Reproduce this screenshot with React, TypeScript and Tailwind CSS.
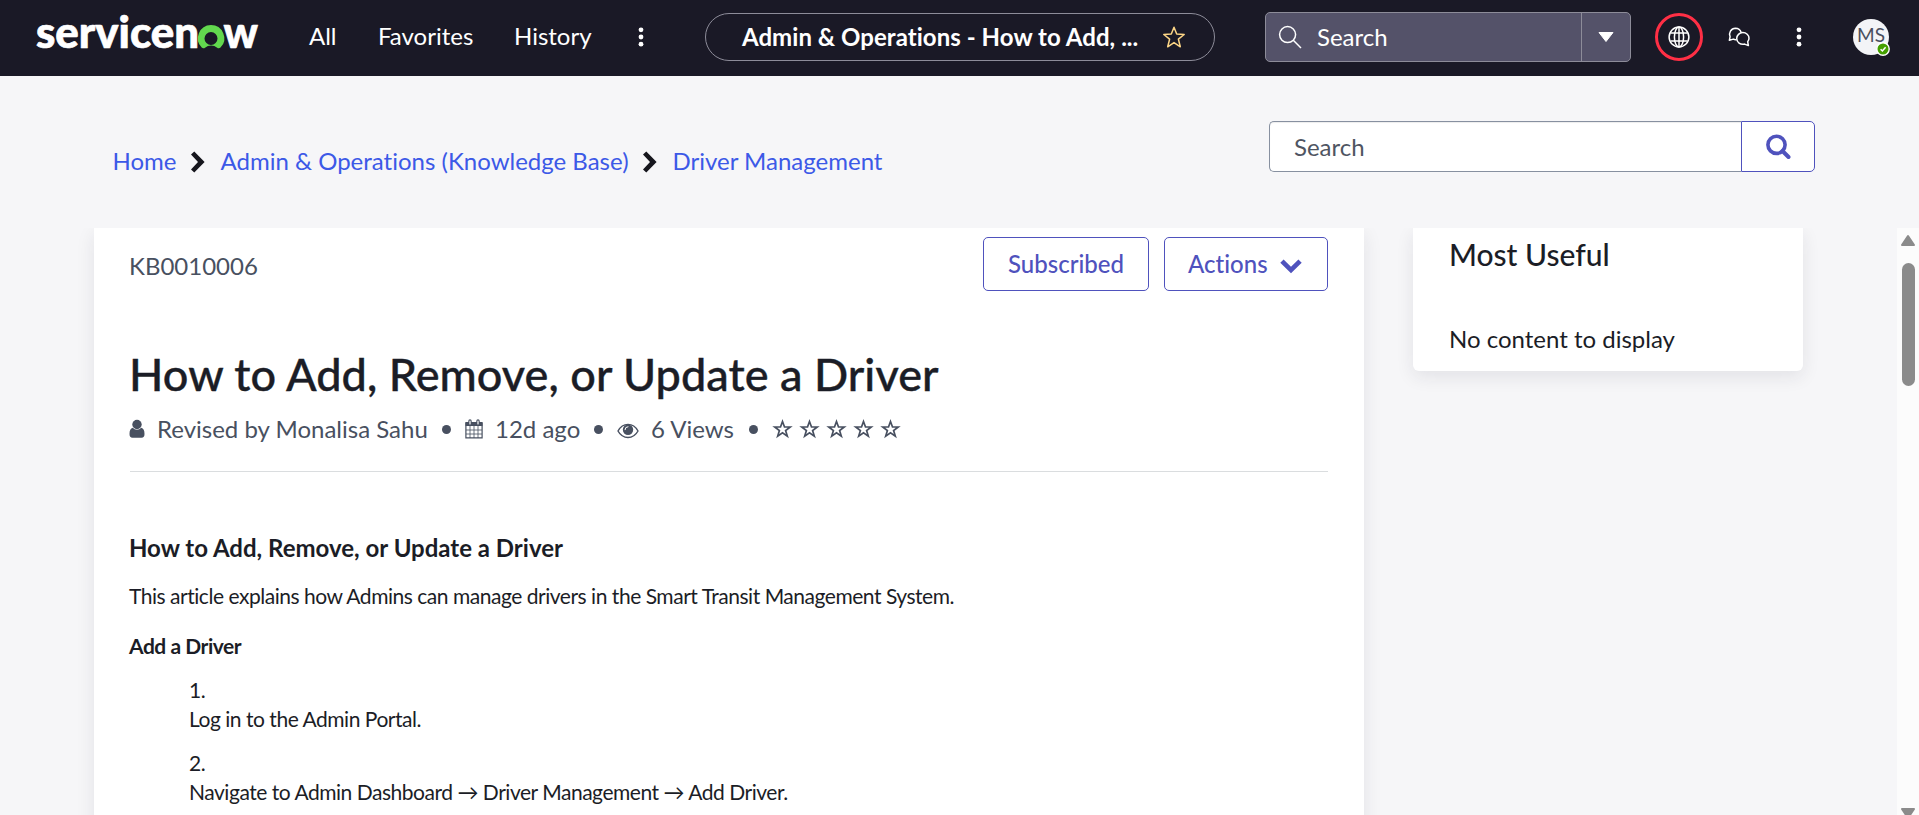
import React from "react";

function Dots({ className }: { className: string }) {
  return (
    <svg className={className} width="6" height="24" viewBox="0 0 6 24" fill="#fff">
      <circle cx="3" cy="4.8" r="2.4" />
      <circle cx="3" cy="12" r="2.4" />
      <circle cx="3" cy="19.2" r="2.4" />
    </svg>
  );
}

function Logo() {
  return (
    <svg className="ml-[34px] shrink-0" width="228" height="76" viewBox="34 0 228 76" fontFamily="Lato, sans-serif" fontWeight="900" fontSize="43" stroke="#fff" strokeWidth="0.700" strokeLinejoin="round">
      <text x="36" y="47.5" fill="#fff" textLength="163" lengthAdjust="spacingAndGlyphs">servicen</text>
      <path stroke="none" fill="#62d84e" d="M211 25a13.300 13.300 0 0 0-9.300 22.600c.9.900 2.300 1 3.300.2a9.600 9.600 0 0 1 12.200 0c1 .8 2.400.7 3.300-.2A13.300 13.300 0 0 0 211 25zm0 20a6.500 6.500 0 1 1 0-13 6.500 6.500 0 0 1 0 13z" />
      <text x="223.500" y="47.500" fill="#fff" textLength="34.500" lengthAdjust="spacingAndGlyphs">w</text>
    </svg>
  );
}

function Header() {
  return (
    <header className="flex h-[76px] shrink-0 items-center bg-[#1a1926] text-2xl text-white">
      <Logo />
      <nav className="-mt-1 flex h-[72px] items-center">
        <span className="ml-[47px] w-[69px]">All</span>
        <span className="w-[136px]">Favorites</span>
        <span className="w-[124px]">History</span>
      </nav>
      <Dots className="-mt-[2px] shrink-0" />
      <div className="-mt-[2px] ml-[61px] flex h-12 w-[510px] shrink-0 items-center rounded-full border border-[#8d8c99]">
        <span className="-mt-px ml-9 w-[420px] whitespace-nowrap font-bold tracking-[0.04px]">Admin &amp; Operations - How to Add, ...</span>
        <svg width="24" height="24" viewBox="0 0 24 24" fill="none" stroke="#fcd586" strokeWidth="1.500" strokeLinejoin="round">
          <path d="M12 2.200l2.700 6.900 7.500.4-5.800 4.700 1.900 7.600-6.300-4.200-6.300 4.200 1.900-7.600L1.800 9.500l7.500-.4z" />
        </svg>
      </div>
      <div className="-mt-[2px] ml-[50px] flex h-[50px] w-[366px] shrink-0 rounded-[5px] border border-[#8d8c99] bg-[#545269]">
        <div className="flex w-[316px] items-center border-r border-[#8d8c99]">
          <svg className="ml-3" width="24" height="24" viewBox="0 0 24 24" fill="none" stroke="#fff" strokeWidth="1.500">
            <circle cx="9.600" cy="9.600" r="8" />
            <path d="M15.300 15.300l7.700 7.700" />
          </svg>
          <span className="ml-[15px]">Search</span>
        </div>
        <div className="flex flex-1 items-center justify-center">
          <svg width="16" height="10" viewBox="0 0 16 10" fill="#fff">
            <path d="M1 .5h14L8 9.500z" stroke="#fff" strokeLinejoin="round" />
          </svg>
        </div>
      </div>
      <div className="-mt-[2px] ml-6 flex size-12 shrink-0 items-center justify-center rounded-full border-[3px] border-[#ff2f45]">
        <svg width="22" height="22" viewBox="0 0 22 22" fill="none" stroke="#fff" strokeWidth="1.500">
          <circle cx="11" cy="11" r="9.900" />
          <ellipse cx="11" cy="11" rx="4.600" ry="9.900" />
          <path d="M11 1v20M2.300 7h17.400M2.300 15h17.400" />
        </svg>
      </div>
      <svg className="-mt-[2px] ml-6 shrink-0" width="24" height="24" viewBox="0 0 24 24" fill="none" stroke="#fff" strokeWidth="1.500" strokeLinejoin="round">
        <path d="M9.500 14.600c-1.200.2-2.200 0-3.200-.5L2.400 15.200l.7-3.500A6 6 0 0 1 8.400 3.200c2.800 0 5 1.700 5.800 4.200" />
        <path d="M15.800 7.600c3.500 0 6.200 2.600 6.200 5.700 0 1.400-.5 2.500-1.300 3.500l.7 3.800-3.800-1.500c-4.300 1-7.900-1.900-7.900-5.600 0-3.200 2.700-5.900 6.100-5.900z" />
      </svg>
      <Dots className="-mt-[2px] ml-[45px] shrink-0" />
      <div className="relative -mt-[2px] ml-[51px] flex size-9 shrink-0 items-center justify-center rounded-full bg-[#f3f4f7] text-[19px] text-[#4a4f5e]">
        <span className="-mt-[4px]">MS</span>
        <svg className="absolute -right-px -bottom-px" width="14" height="14" viewBox="0 0 14 14">
          <circle cx="7" cy="7" r="6.200" fill="#44a000" stroke="#fff" strokeWidth="1.400" />
          <path d="M4.600 7.200l1.800 1.800 3.200-3.700" fill="none" stroke="#fff" strokeWidth="1.500" />
        </svg>
      </div>
    </header>
  );
}

function Crumb() {
  return (
    <svg className="mt-0.5 shrink-0" width="16" height="22" viewBox="0 0 16 22" fill="#16161d">
      <path d="M1 3.500L4.300.6 14.600 11 4.300 21.400 1 18.500 8 11z" />
    </svg>
  );
}

function Toolbar() {
  return (
    <div className="flex h-[152px] shrink-0 items-start justify-between pr-[104px] pl-[112.5px] text-2xl">
      <div className="mt-[67px] flex h-9 items-center whitespace-nowrap text-[#3c59e7]">
        <a className="w-[77.5px]">Home</a>
        <Crumb />
        <a className="ml-[14.5px] w-[421.5px]">Admin &amp; Operations (Knowledge Base)</a>
        <Crumb />
        <a className="ml-[14.5px]">Driver Management</a>
      </div>
      <div className="mt-[45px] flex h-[51px] w-[546px] rounded-[5px] bg-white">
        <div className="flex w-[472px] items-center rounded-l-[5px] border border-r-0 border-[#8790a0] pl-6 text-[#4f5562] shadow-[inset_0_1px_1px_rgba(0,0,0,0.075)]">
          Search
        </div>
        <div className="flex w-[74px] items-center justify-center rounded-r-[5px] border border-[#4f52bd]">
          <svg width="26" height="26" viewBox="0 0 26 26" fill="none" stroke="#4f52bd">
            <circle cx="11.500" cy="10.800" r="8.600" strokeWidth="3.600" />
            <path d="M17.500 17l6 6" strokeWidth="4" strokeLinecap="round" />
          </svg>
        </div>
      </div>
    </div>
  );
}

function Bullet() {
  return <span className="mt-px size-[9px] shrink-0 rounded-full bg-[#485060]" />;
}

function UserIcon() {
  return (
    <svg className="-ml-px shrink-0" width="16" height="20" viewBox="0 0 16 20" fill="#485060">
      <circle cx="8" cy="5.500" r="4.700" />
      <path d="M3.800 8.800C1.500 9.200.5 11.500.5 15c0 2.500 1 3.800 3 3.800h9c2 0 3-1.300 3-3.800 0-3.500-1-5.800-3.300-6.200a5.600 5.600 0 0 1-8.400 0z" />
    </svg>
  );
}

function EyeIcon() {
  return (
    <svg className="mt-1 ml-[14px] shrink-0" width="22" height="16" viewBox="0 0 22 16" fill="none" stroke="#485060">
      <path d="M1 8C3.300 3.800 6.800 1.400 11 1.400S18.700 3.800 21 8c-2.300 4.200-5.800 6.500-10 6.500S3.300 12.200 1 8z" strokeWidth="1.400" />
      <circle cx="11" cy="6.700" r="5.200" fill="#485060" stroke="none" />
      <path d="M8 6.700a3 3 0 0 1 3-3" stroke="#fff" strokeWidth="1" strokeLinecap="round" />
    </svg>
  );
}

function Calendar() {
  return (
    <svg className="ml-[14px] shrink-0" width="18" height="20" viewBox="0 0 18 20" fill="none" stroke="#485060">
      <path d="M.9 4h16.200v14.900H.9z" strokeWidth="1.200" />
      <path d="M.5 3h17v4H.5z" fill="#485060" stroke="none" />
      <path d="M5 7v12M9 7v12M13 7v12M1 11h16M1 15h16" strokeWidth="0.800" />
      <path d="M5 2v3M13 2v3" strokeWidth="3.400" strokeLinecap="round" />
      <path d="M5 2v3M13 2v3" stroke="#fff" strokeWidth="1.200" strokeLinecap="round" />
    </svg>
  );
}

function RatingStar() {
  return (
    <svg width="21" height="20" viewBox="0 0 21 20" fill="none" stroke="#485060" strokeWidth="1.700">
      <path d="M10.500 2.500l2 5.500h5.700l-4.600 3.500 1.700 5.600-4.800-3.400-4.800 3.400 1.700-5.600L2.800 8h5.700z" />
    </svg>
  );
}

function Article() {
  return (
    <article className="h-[620px] w-[1270px] shrink-0 bg-white pr-9 pl-9 text-[#1b1d26] shadow-[0_6px_18px_rgba(30,32,50,0.09)]">
      <div className="flex h-[63px] items-start text-2xl">
        <span className="mt-[22px] -ml-px flex-1 text-[#485060]">KB0010006</span>
        <button className="mt-[9px] h-[54px] w-[166px] rounded-[5px] border border-[#4f52bd] font-medium text-[#4f52bd]">Subscribed</button>
        <button className="mt-[9px] ml-[15px] flex h-[54px] w-[164px] items-center rounded-[5px] border border-[#4f52bd] pl-[23px] font-medium text-[#4f52bd]">
          <span className="w-[92px] text-left">Actions</span>
          <svg className="mt-1" width="22" height="15" viewBox="0 0 22 15" fill="#4f52bd">
            <path d="M.3 3.800L3.600.6 11 7.800 18.400.6l3.300 3.200L11 14.200z" />
          </svg>
        </button>
      </div>
      <h1 className="mt-[53px] -ml-px h-[60px] whitespace-nowrap text-[45px] leading-[60px] font-medium tracking-[0.06px] [-webkit-text-stroke:0.4px]">How to Add, Remove, or Update a Driver</h1>
      <div className="mt-[7px] flex h-9 items-center whitespace-nowrap text-2xl text-[#485060]">
        <UserIcon />
        <span className="ml-3 w-[285px]">Revised by Monalisa Sahu</span>
        <Bullet />
        <Calendar />
        <span className="ml-3 w-[99px]">12d ago</span>
        <Bullet />
        <EyeIcon />
        <span className="ml-3 w-[98px]">6 Views</span>
        <Bullet />
        <span className="ml-[14px] flex gap-[6px]">
          <RatingStar /><RatingStar /><RatingStar /><RatingStar /><RatingStar />
        </span>
      </div>
      <hr className="mt-6 border-[#dadddf]" />
      <h2 className="mt-[58px] -ml-px h-9 text-2xl leading-9 font-bold">How to Add, Remove, or Update a Driver</h2>
      <p className="mt-[15px] -ml-px text-[21px] leading-[30px] tracking-[-0.47px]">This article explains how Admins can manage drivers in the Smart Transit Management System.</p>
      <h3 className="mt-5 -ml-px text-[21px] leading-[30px] font-bold tracking-[-0.47px]">Add a Driver</h3>
      <ol className="mt-[14px] -ml-px flex flex-col gap-[15px] pl-[60px] text-[21px] leading-[29px] tracking-[-0.47px]">
        <li>1.<p>Log in to the Admin Portal.</p></li>
        <li>2.<p>Navigate to Admin Dashboard → Driver Management → Add Driver.</p></li>
      </ol>
    </article>
  );
}

function Scrollbar() {
  return (
    <div className="ml-auto flex w-[22px] flex-col items-center bg-[#fcfcfc] pt-[6px]">
      <svg className="shrink-0" width="16" height="12" viewBox="0 0 16 12" fill="#8b8b8b">
        <path d="M2 11L8 2l6 9z" stroke="#8b8b8b" strokeWidth="2" strokeLinejoin="round" />
      </svg>
      <div className="mt-[17px] h-[123px] w-[13px] shrink-0 rounded-full bg-[#8b8b8b]" />
      <svg className="mt-[421px] shrink-0" width="16" height="12" viewBox="0 0 16 12" fill="#8b8b8b">
        <path d="M2 2l6 9 6-9z" stroke="#8b8b8b" strokeWidth="2" strokeLinejoin="round" />
      </svg>
    </div>
  );
}

export default function App() {
  return (
    <div className="flex h-[815px] w-[1919px] flex-col overflow-hidden bg-[#f6f6f8] font-[Lato,sans-serif] [font-variant-ligatures:none]">
      <Header />
      <Toolbar />
      <main className="flex h-[587px] overflow-hidden pl-[94px]">
        <Article />
        <aside className="ml-[49px] h-[143px] w-[390px] shrink-0 rounded-b-[6px] bg-white pl-9 text-[#1b1d26] shadow-[0_6px_18px_rgba(30,32,50,0.09)]">
          <h2 className="pt-[5px] text-[30px] leading-[42px] font-medium">Most Useful</h2>
          <p className="mt-[46px] text-2xl leading-9">No content to display</p>
        </aside>
        <Scrollbar />
      </main>
    </div>
  );
}
